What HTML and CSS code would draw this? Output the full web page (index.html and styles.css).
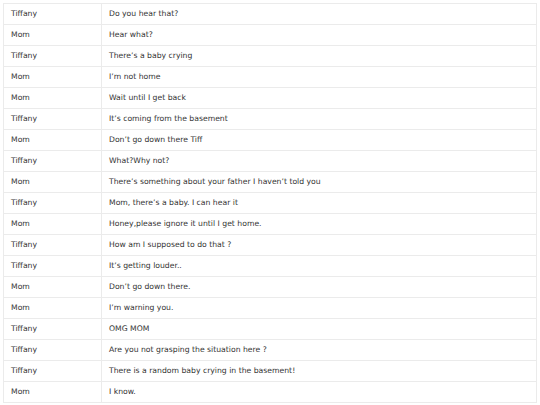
FILE: index.html
```html
<!DOCTYPE html>
<html>
<head>
<meta charset="utf-8">
<link rel="stylesheet" href="styles.css">
</head>
<body>
<table class="chat">
<tbody>
<tr><td class="who">Tiffany</td><td>Do you hear that?</td></tr>
<tr><td class="who">Mom</td><td>Hear what?</td></tr>
<tr><td class="who">Tiffany</td><td>There’s a baby crying</td></tr>
<tr><td class="who">Mom</td><td>I’m not home</td></tr>
<tr><td class="who">Mom</td><td>Wait until I get back</td></tr>
<tr><td class="who">Tiffany</td><td>It’s coming from the basement</td></tr>
<tr><td class="who">Mom</td><td>Don’t go down there Tiff</td></tr>
<tr><td class="who">Tiffany</td><td>What?Why not?</td></tr>
<tr><td class="who">Mom</td><td>There’s something about your father I haven’t told you</td></tr>
<tr><td class="who">Tiffany</td><td>Mom, there’s a baby. I can hear it</td></tr>
<tr><td class="who">Mom</td><td>Honey,please ignore it until I get home.</td></tr>
<tr><td class="who">Tiffany</td><td>How am I supposed to do that ?</td></tr>
<tr><td class="who">Tiffany</td><td>It’s getting louder..</td></tr>
<tr><td class="who">Mom</td><td>Don’t go down there.</td></tr>
<tr><td class="who">Mom</td><td>I’m warning you.</td></tr>
<tr><td class="who">Tiffany</td><td>OMG MOM</td></tr>
<tr><td class="who">Tiffany</td><td>Are you not grasping the situation here ?</td></tr>
<tr><td class="who">Tiffany</td><td>There is a random baby crying in the basement!</td></tr>
<tr><td class="who">Mom</td><td>I know.</td></tr>
</tbody>
</table>
</body>
</html>
```
FILE: styles.css
```css
html, body {
  margin: 0;
  padding: 0;
  background: #fff;
}
body {
  padding: 3px;
  font-family: "DejaVu Sans", Verdana, sans-serif;
  font-size: 7.7px;
  color: #333;
}
.chat {
  border-collapse: collapse;
  width: 534px;
  border: 1px solid #ebebeb;
}
.chat td {
  border: 1px solid #ebebeb;
  height: 21px;
  padding: 0 7px;
  box-sizing: border-box;
  vertical-align: middle;
  line-height: 10px;
}
.chat td.who {
  width: 98px;
}
```
